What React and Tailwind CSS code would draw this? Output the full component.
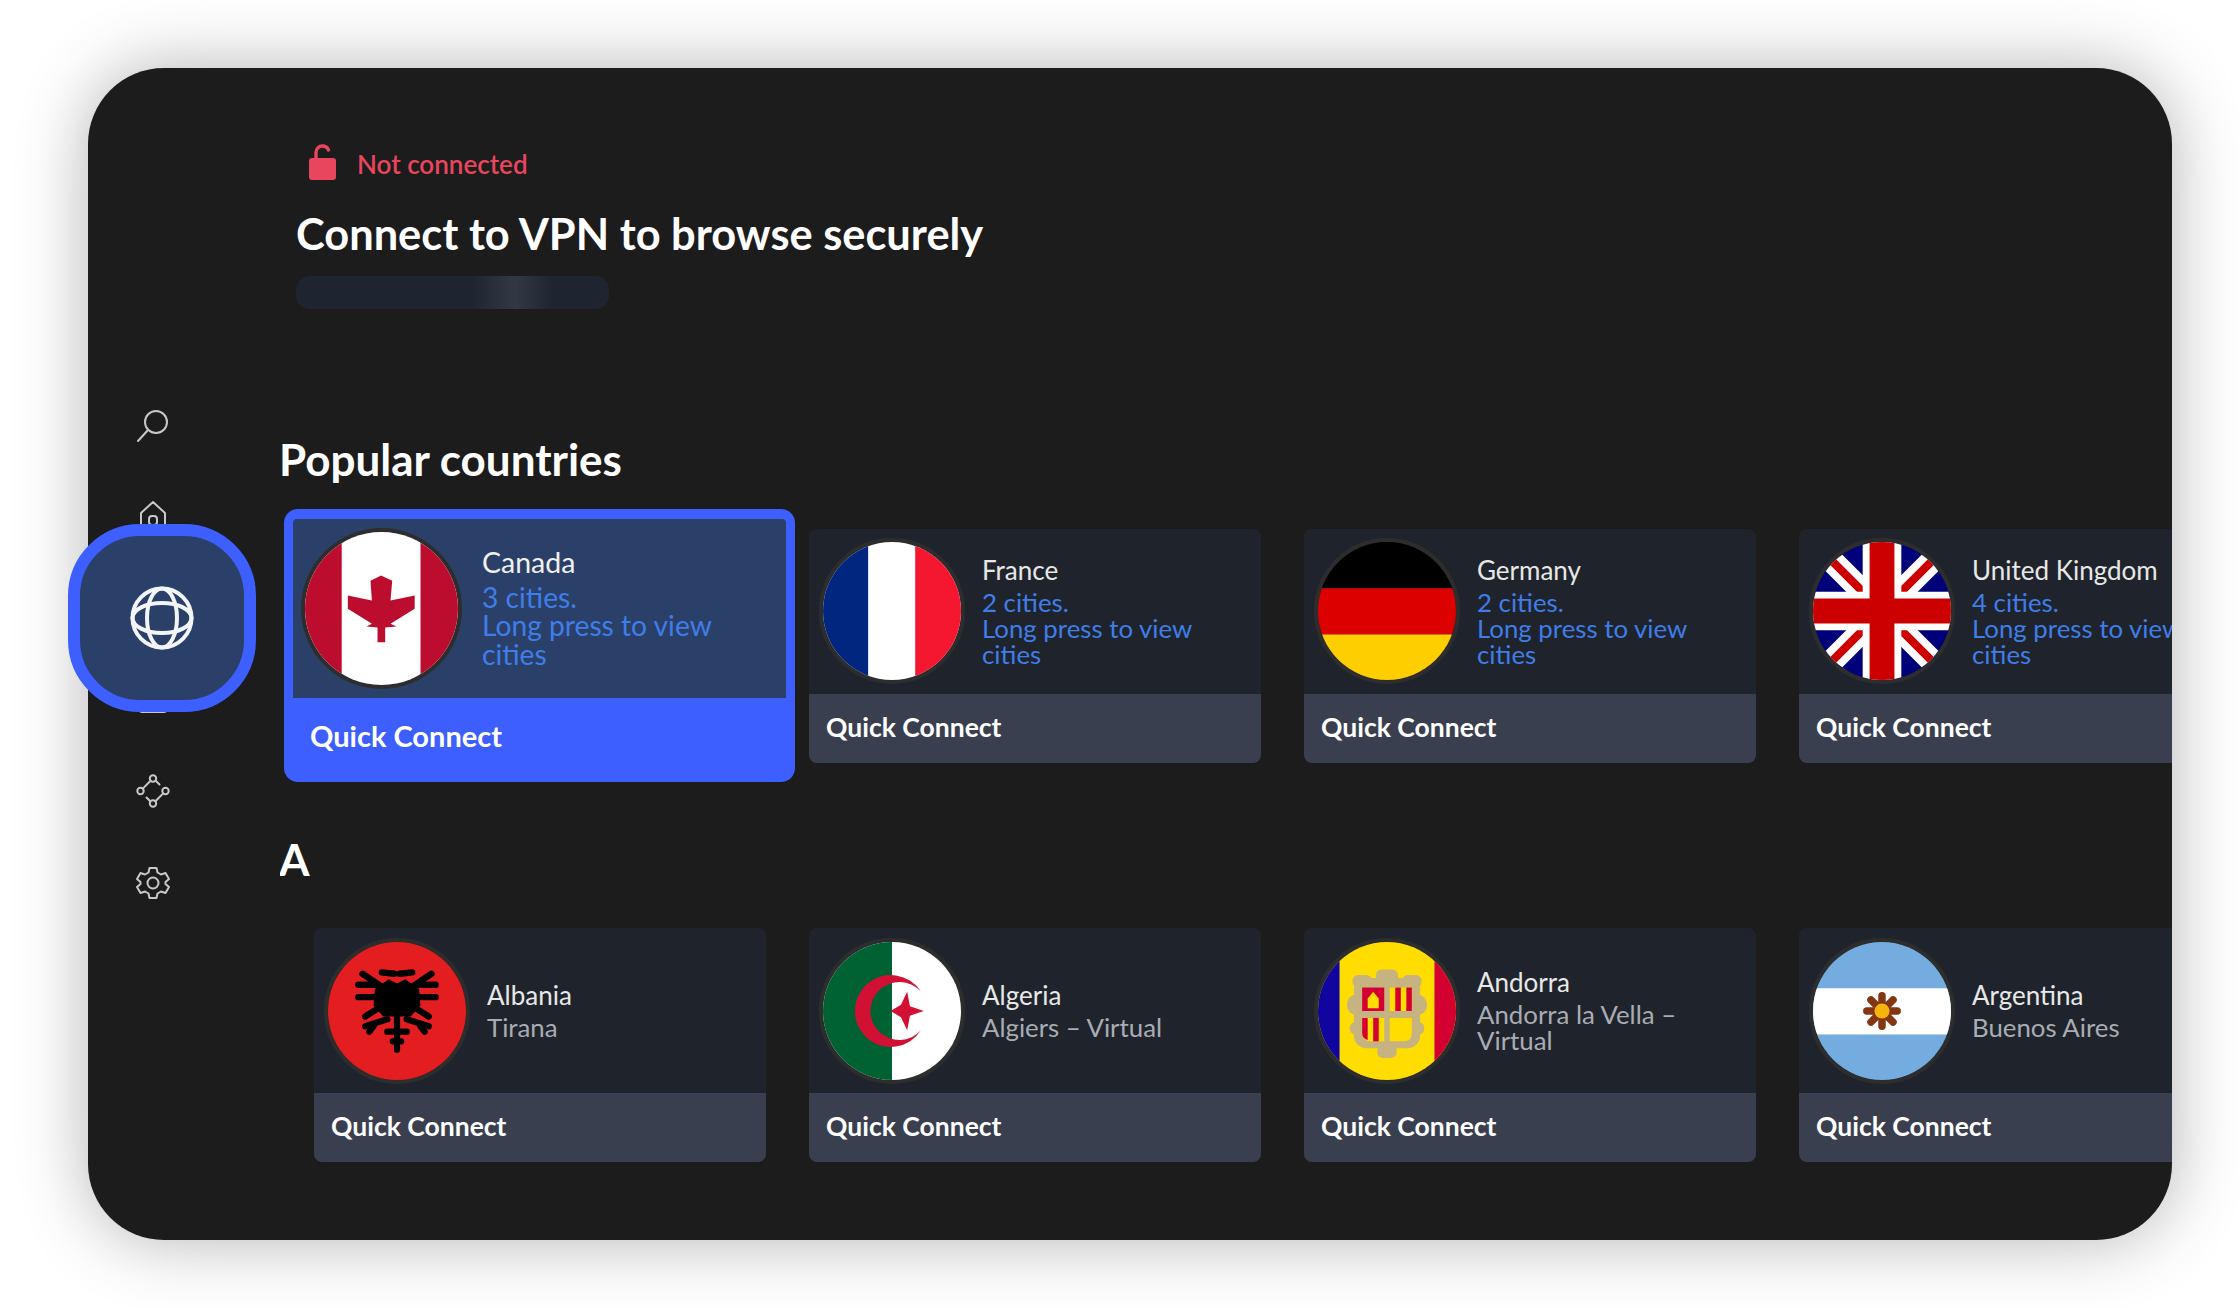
import React from 'react';

const Ring = ({ size = 'w-[146px] h-[146px]', children }) => (
  <div className={`${size} shrink-0 rounded-full overflow-hidden border-[4px] border-[#2d2d2d]`}>
    <svg viewBox="0 0 100 100" preserveAspectRatio="none" className="block w-full h-full">{children}</svg>
  </div>
);

const Canada = () => (
  <>
    <rect width="100" height="100" fill="#fff" />
    <rect width="24" height="100" fill="#bd0d2f" />
    <rect x="75.5" width="24.5" height="100" fill="#bd0d2f" />
    <polygon fill="#bd0d2f" points="49.7,28.4 57,31.9 55.9,44.8 71.7,41.5 71.7,50.2 55.9,60 59.8,61.8 52.4,62.4 52.4,72 47.4,72 47.4,62.4 40.2,61.8 43.7,60 28,50.2 28,41.5 43.7,44.8 42.8,31.9" />
  </>
);
const France = () => (
  <>
    <rect width="100" height="100" fill="#fff" />
    <rect width="32.7" height="100" fill="#00267f" />
    <rect x="66.8" width="33.2" height="100" fill="#f4172f" />
  </>
);
const Germany = () => (
  <>
    <rect width="100" height="33.5" fill="#000" />
    <rect y="33.5" width="100" height="33.5" fill="#dd0000" />
    <rect y="67" width="100" height="33" fill="#ffce00" />
  </>
);
const UK = () => (
  <>
    <rect width="100" height="100" fill="#00007b" />
    <path d="M0 0L100 100M100 0L0 100" stroke="#fff" strokeWidth="17" />
    <path d="M0 0L100 100M100 0L0 100" stroke="#cc0000" strokeWidth="6" />
    <path d="M50 0V100M0 50H100" stroke="#fff" strokeWidth="28" />
    <path d="M50 0V100M0 50H100" stroke="#cc0000" strokeWidth="18" />
  </>
);
const eagleLines = [
  [25, 23, 40, 33], [22, 31, 36, 31], [22, 40, 36, 40], [27, 54, 38, 47], [27, 61, 43, 56], [30, 65, 33, 61], [39, 22, 48, 23],
];
const Albania = () => (
  <>
    <rect width="100" height="100" fill="#e41e20" />
    <g stroke="#000" strokeWidth="4.6" strokeLinecap="round">
      {eagleLines.map(([a, b, c, d], i) => (
        <g key={i}>
          <line x1={a} y1={b} x2={c} y2={d} />
          <line x1={100 - a} y1={b} x2={100 - c} y2={d} />
        </g>
      ))}
      <line x1="50" y1="48" x2="50" y2="78" strokeWidth="4.5" />
      <line x1="43" y1="65" x2="57" y2="65" />
      <line x1="47" y1="72" x2="53" y2="72" />
    </g>
    <path d="M34 34 L44 27 L50 30 L56 27 L66 34 L67 46 L60 54 L40 54 L33 46Z" fill="#000" />
  </>
);
const Algeria = () => (
  <>
    <rect width="100" height="100" fill="#fff" />
    <rect width="50" height="100" fill="#006233" />
    <path d="M71 36A26 26 0 1 0 71 64A21 21 0 1 1 71 36Z" fill="#d21034" />
    <polygon fill="#d21034" points="73,50 63,53.5 61,64 56.5,54.5 49,50 56.5,45.5 61,36 63,46.5" />
  </>
);
const Andorra = () => (
  <>
    <rect width="100" height="100" fill="#ffdd00" />
    <rect width="15.6" height="100" fill="#10069f" />
    <rect x="84.4" width="15.6" height="100" fill="#d50032" />
    <g fill="#c7b37f">
      <rect x="26" y="26" width="48" height="51" rx="9" />
      <rect x="21" y="38" width="58" height="15" rx="7" />
      <rect x="23" y="58" width="54" height="9" rx="4" />
      <rect x="42" y="20" width="16" height="10" rx="4" />
      <rect x="25" y="24" width="14" height="9" rx="4" />
      <rect x="61" y="24" width="14" height="9" rx="4" />
      <rect x="43" y="74" width="14" height="10" rx="4" />
    </g>
    <rect x="32" y="33" width="16" height="17" fill="#d50032" />
    <polygon points="40,36 44,41 44,48 36,48 36,41" fill="#ffdd00" />
    <rect x="52" y="33" width="16" height="17" fill="#ffdd00" />
    <rect x="56" y="33" width="4" height="17" fill="#d50032" />
    <rect x="64" y="33" width="4" height="17" fill="#d50032" />
    <path d="M32 55H48V72H38Q32 72 32 66Z" fill="#ffdd00" />
    <path d="M32 55H36V71Q32 70 32 66Z" fill="#d50032" />
    <rect x="40" y="55" width="4" height="17" fill="#d50032" />
    <path d="M52 55H68V66Q68 72 62 72H52Z" fill="#ffdd00" />
  </>
);
const Argentina = () => (
  <>
    <rect width="100" height="100" fill="#74acdf" />
    <rect y="33.5" width="100" height="33.5" fill="#fff" />
    <g stroke="#843511" strokeWidth="5.4" strokeLinecap="round">
      <line x1="50" y1="39" x2="50" y2="61" />
      <line x1="39" y1="50" x2="61" y2="50" />
      <line x1="42" y1="42" x2="58" y2="58" />
      <line x1="58" y1="42" x2="42" y2="58" />
    </g>
    <circle cx="50" cy="50" r="5.5" fill="#f6b40e" />
  </>
);

const Card = ({ flag, name, sub, blue }) => (
  <div className="w-[452px] h-[234px] shrink-0 rounded-[8px] overflow-hidden flex flex-col">
    <div className="h-[165px] bg-[#1f242c] flex items-center pl-[10px]">
      <Ring>{flag}</Ring>
      <div className="ml-[17px] max-w-[255px] -translate-y-[1px]">
        <div className="text-[26px] leading-[32px] mb-[3px] text-[#e8e8e8] whitespace-nowrap">{name}</div>
        <div className={`text-[25.8px] leading-[26px] ${blue ? 'text-[#3f7de8]' : 'text-[#a9adb3]'}`}>
          {sub}
        </div>
      </div>
    </div>
    <div className="h-[69px] bg-[#393f4e] flex items-center px-[17px] pb-[1px] text-[26.5px] font-bold text-white">
      Quick Connect
    </div>
  </div>
);

const FocusedCard = () => (
  <div className="w-[511px] h-[273px] shrink-0 rounded-[14px] bg-[#3d5fff] px-[9px] pt-[10px] flex flex-col">
    <div className="h-[179px] bg-[#2b4068] rounded-t-[4px] flex items-center pl-[8px]">
      <Ring size="w-[161px] h-[161px]"><Canada /></Ring>
      <div className="ml-[20px] max-w-[280px]">
        <div className="text-[28.5px] leading-[30px] mb-[4px] -translate-y-[2px] text-[#f0f0f0]">Canada</div>
        <div className="text-[28.2px] leading-[28.5px] text-[#3f7de8]">
          3 cities.
          <br />
          Long press to view cities
        </div>
      </div>
    </div>
    <div className="flex-1 flex items-center pl-[17px] pb-[9px] text-[29px] font-bold text-white">
      Quick Connect
    </div>
  </div>
);

const iconStroke = { fill: 'none', stroke: '#c8c8c8', strokeWidth: 2, strokeLinecap: 'round', strokeLinejoin: 'round' };

const SideIcon = ({ children }) => (
  <div className="h-[91.4px] flex items-center justify-center">
    <svg viewBox="0 0 34 34" className="w-[34px] h-[34px]" {...iconStroke}>{children}</svg>
  </div>
);

const longPress = (n) => (
  <>
    {n} cities.
    <br />
    Long press to view cities
  </>
);

export default function App() {
  return (
    <div className="w-[2240px] h-[1308px] bg-white pt-[68px] pl-[88px] overflow-hidden font-['Lato',sans-serif]">
      <div className="relative w-[2084px] h-[1172px] rounded-[76px] bg-[#1c1c1c] shadow-[0_0_70px_rgba(0,0,0,0.3)] flex">
        <aside className="w-[192px] shrink-0 pt-[312px] pr-[62px]">
          <SideIcon>
            <circle cx="20" cy="13" r="11" />
            <path d="M12 21L2 32" />
          </SideIcon>
          <SideIcon>
            <path d="M3 13L15 2L27 13V32H3Z" transform="translate(2 0)" />
            <rect x="13" y="16" width="8" height="9" rx="3" />
          </SideIcon>
          <div className="h-[91.4px]" />
          <SideIcon>
            <rect x="2" y="2" width="30" height="27" rx="4" />
          </SideIcon>
          <SideIcon>
            <circle cx="17" cy="4.5" r="3.2" />
            <circle cx="4.5" cy="17" r="3.2" />
            <circle cx="29.5" cy="17" r="3.2" />
            <circle cx="17" cy="29.5" r="3.2" />
            <path d="M6.8 14.6L14.6 6.8M27.2 19.4L19.4 27.2M20 7L23.5 10.5M14 27L10.5 23.5" />
          </SideIcon>
          <SideIcon>
            <circle cx="17" cy="17" r="5.5" />
            <path d="M13.5 2H20.5L21.5 6.5L25 8.5L29.5 7L33 13L29.5 16V18L33 21L29.5 27L25 25.5L21.5 27.5L20.5 32H13.5L12.5 27.5L9 25.5L4.5 27L1 21L4.5 18V16L1 13L4.5 7L9 8.5L12.5 6.5Z" />
          </SideIcon>
        </aside>

        <div className="absolute left-[-20px] top-[456px] w-[188px] h-[188px] rounded-[72px] border-[12px] border-[#3d5fff] bg-[#2b4068] flex items-center justify-center">
          <svg viewBox="0 0 64 64" className="w-[64px] h-[64px]" fill="none" stroke="#f2f4f8" strokeWidth="4">
            <circle cx="32" cy="32" r="29.5" />
            <ellipse cx="32" cy="32" rx="15" ry="29.5" />
            <ellipse cx="32" cy="32" rx="29.5" ry="15" />
          </svg>
        </div>

        <main className="flex-1 min-w-0 overflow-hidden">
          <div className="pl-[16px]">
            <div className="mt-[78px] h-[36px] flex items-center">
              <svg viewBox="0 0 27 36" className="ml-[13px] w-[27px] h-[36px] -translate-y-[2px]">
                <path d="M7 17V8.5A6.5 6.5 0 0 1 13.5 2A6.5 6.5 0 0 1 19.5 6" fill="none" stroke="#e8465e" strokeWidth="3.4" strokeLinecap="round" />
                <rect x="0" y="14" width="27" height="22" rx="3" fill="#e8465e" />
              </svg>
              <span className="ml-[21px] text-[26px] font-semibold text-[#e8465e] leading-none">Not connected</span>
            </div>
            <h1 className="mt-[23px] h-[56px] text-[43.4px] leading-[56px] font-bold text-white whitespace-nowrap">
              Connect to VPN to browse securely
            </h1>
            <div className="mt-[15px] w-[313px] h-[33px] rounded-[14px] bg-[linear-gradient(90deg,#1f2530_0%,#1f2530_56%,#333944_70%,#1f2530_82%,#1f2530_100%)]" />
          </div>

          <h2 className="mt-[122px] -ml-[1px] h-[56px] text-[44px] leading-[56px] font-bold text-white whitespace-nowrap">
            Popular countries
          </h2>
          <div className="mt-[22px] pl-[4px] flex items-center">
            <FocusedCard />
            <div className="ml-[14px] flex gap-[43px]">
              <Card flag={<France />} name="France" sub={longPress(2)} blue />
              <Card flag={<Germany />} name="Germany" sub={longPress(2)} blue />
              <Card flag={<UK />} name="United Kingdom" sub={longPress(4)} blue />
            </div>
          </div>

          <h2 className="mt-[49px] -ml-[1px] h-[56px] text-[44px] leading-[56px] font-bold text-white">A</h2>
          <div className="mt-[41px] pl-[34px] flex gap-[43px]">
            <Card flag={<Albania />} name="Albania" sub="Tirana" />
            <Card flag={<Algeria />} name="Algeria" sub="Algiers – Virtual" />
            <Card flag={<Andorra />} name="Andorra" sub="Andorra la Vella – Virtual" />
            <Card flag={<Argentina />} name="Argentina" sub="Buenos Aires" />
          </div>
        </main>
      </div>
    </div>
  );
}
